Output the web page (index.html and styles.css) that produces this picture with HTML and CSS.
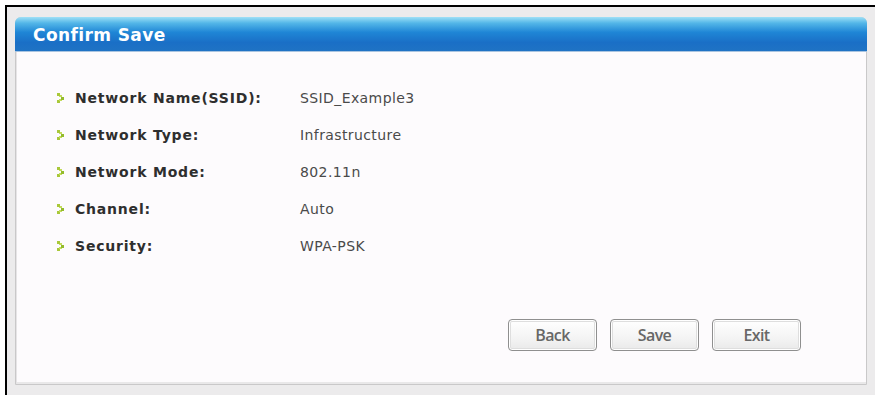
FILE: index.html
```html
<!DOCTYPE html>
<html lang="en">
<head>
  <meta charset="UTF-8">
  <title>Confirm Save</title>
  <link rel="stylesheet" href="styles.css">
</head>
<body>
  <div class="screen">
    <div class="panel">
      <div class="panel-header">
        <h1>Confirm Save</h1>
      </div>

      <div class="panel-body">
        <!-- summary of the wireless settings -->
        <ul class="summary">
          <li>
            <span class="label"><span class="bullet"></span>Network Name(SSID):</span>
            <span class="value">SSID_Example3</span>
          </li>
          <li>
            <span class="label"><span class="bullet"></span>Network Type:</span>
            <span class="value">Infrastructure</span>
          </li>
          <li>
            <span class="label"><span class="bullet"></span>Network Mode:</span>
            <span class="value">802.11n</span>
          </li>
          <li>
            <span class="label"><span class="bullet"></span>Channel:</span>
            <span class="value">Auto</span>
          </li>
          <li>
            <span class="label"><span class="bullet"></span>Security:</span>
            <span class="value">WPA-PSK</span>
          </li>
        </ul>

        <div class="buttons">
          <button>Back</button>
          <button>Save</button>
          <button>Exit</button>
        </div>
      </div>
    </div>
  </div>
</body>
</html>
```

FILE: styles.css
```css
html, body {
  margin: 0;
  padding: 0;
  height: 100%;
}

body {
  background-color: #fff;
  font-family: "DejaVu Sans", Verdana, sans-serif;
  color: #333;
}

.screen {
  box-sizing: border-box;
  height: calc(100% - 5px);
  margin: 5px 0 0 5px;
  border-top: 2px solid #000;
  border-left: 2px solid #000;
  padding: 10px 8px 10px 8px;
  background-color: #ecebec;
  display: flex;
}

.panel {
  flex: 1;
  display: flex;
  flex-direction: column;
  background-color: #fdfbfd;
  border: 1px solid #c9c8c9;
  border-radius: 6px 6px 0 0;
  box-shadow: inset 1px 0 0 #e6e4e6, inset 0 -2px 0 #e9e8e9;
}

.panel-header {
  height: 34px;
  margin: -1px -1px 0 -1px;
  border-radius: 6px 6px 0 0;
  background: linear-gradient(to bottom, #9fe0f6 0%, #53b6e8 18%, #1f86d6 45%, #1a6fc6 75%, #1f73c4 100%);
  border-bottom: 1px solid #a9c4e0;
  display: flex;
  align-items: center;
}

.panel-header h1 {
  margin: 2px 0 0 18px;
  font-size: 17px;
  font-weight: bold;
  letter-spacing: 0.4px;
  color: #fff;
}

.panel-body {
  flex: 1;
  padding: 27px 0 0 41px;
  display: flex;
  flex-direction: column;
}

.summary {
  list-style: none;
  margin: 0;
  padding: 0;
}

.summary li {
  display: flex;
  align-items: center;
  height: 37px;
}

.summary .label {
  width: 243px;
  display: flex;
  align-items: center;
  font-weight: bold;
  font-size: 14px;
  letter-spacing: 0.8px;
  color: #2e2e2e;
}

.summary .value {
  font-size: 14px;
  letter-spacing: 0.4px;
  color: #4a4a4a;
}

.bullet {
  width: 8px;
  height: 10px;
  margin-right: 10px;
  background:
    linear-gradient(#a9c83a, #a9c83a) 0 0 / 3px 3px no-repeat,
    linear-gradient(#c3dc5c, #c3dc5c) 2px 2px / 3px 2px no-repeat,
    linear-gradient(#94bb2c, #94bb2c) 4px 4px / 3px 3px no-repeat,
    linear-gradient(#c3dc5c, #c3dc5c) 2px 6px / 3px 2px no-repeat,
    linear-gradient(#a9c83a, #a9c83a) 0 7px / 3px 3px no-repeat;
}

.buttons {
  display: flex;
  gap: 13px;
  margin: 55px 0 0 451px;
}

.buttons button {
  width: 89px;
  height: 32px;
  padding: 0;
  border: 1px solid #8f8f8f;
  border-radius: 4px;
  background: linear-gradient(to bottom, #ffffff 0%, #f4f4f4 60%, #e9e9e9 100%);
  box-shadow: inset 0 0 0 1px #fff, inset 0 0 0 2px #dedede;
  font-family: "Open Sans", sans-serif;
  font-weight: 600;
  font-size: 16px;
  letter-spacing: -0.6px;
  color: #676767;
  cursor: pointer;
}
```
